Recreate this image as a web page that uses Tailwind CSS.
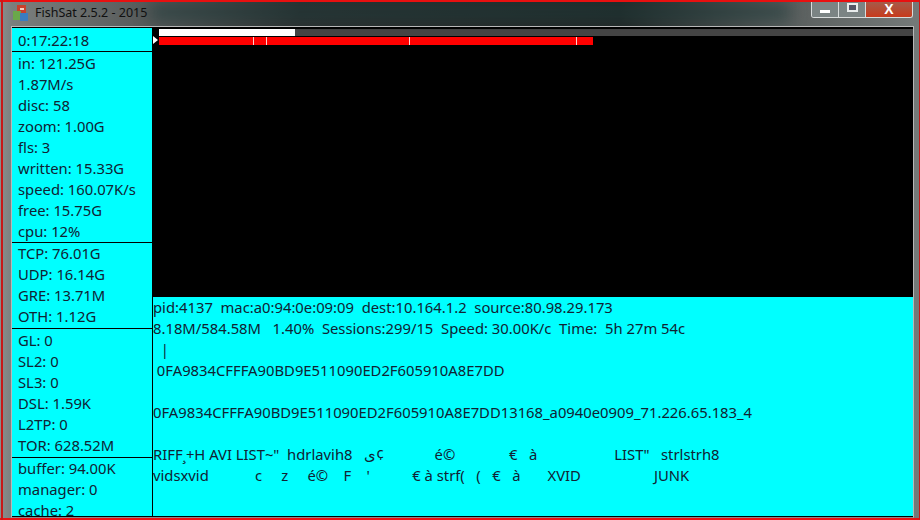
<!DOCTYPE html>
<html lang="en">
<head>
<meta charset="UTF-8">
<title>FishSat</title>
<script src="https://cdn.jsdelivr.net/npm/@tailwindcss/browser@4"></script>
</head>
<body class="w-[920px] h-[520px] overflow-hidden bg-[#555] font-['Noto_Sans','Liberation_Sans',sans-serif]">
<div class="relative w-[920px] h-[520px] flex flex-col border-t-2 border-b-2 border-[#e81010] bg-[linear-gradient(90deg,#8a8f8d_0,#7b7f7e_12px,#2c3030_300px,#222827_620px,#5c6160_800px,#757a79_920px)]">
  <div class="absolute left-[1px] -top-[2px] w-[2px] h-[520px] bg-[#c81818]"></div>
  <div class="absolute right-0 -top-[2px] w-[1px] h-[520px] bg-[#c81818]"></div>
  <!-- title bar -->
  <div class="relative h-[24px] shrink-0 flex items-center pl-[12px] pb-[2px] gap-[6px] overflow-hidden">
    <div class="absolute left-[150px] top-[2px] w-[640px] h-[16px] bg-[#1d3a3a]/60 blur-sm"></div>
    <svg class="relative" width="17" height="17" viewBox="0 0 17 17">
      <rect x="5" y="0" width="9" height="9" fill="#c8402c"/>
      <rect x="1" y="6" width="8" height="9" fill="#6aa84a"/>
      <rect x="8" y="8" width="8" height="8" fill="#3a7cc0"/>
      <rect x="8" y="3" width="4" height="2" fill="#f4d0c0"/>
    </svg>
    <span class="relative text-[12.5px] text-[#101010]">FishSat 2.5.2 - 2015</span>
    <div class="absolute top-[-2px] left-[811px] flex h-[18px] border border-t-0 border-[#d8dcdc] rounded-b-[3px] overflow-hidden">
      <div class="w-[27px] flex items-end justify-center pb-[4px] bg-[#7b8484] border-r border-[#d8dcdc]"><div class="w-[10px] h-[3px] bg-white"></div></div>
      <div class="w-[27px] flex items-start justify-center pt-[3px] bg-[#7b8484] border-r border-[#d8dcdc]"><div class="w-[11px] h-[9px] border-2 border-[#e8ecec] bg-[#556]"></div></div>
      <div class="w-[46px] flex items-center justify-center bg-[linear-gradient(180deg,#a06050,#c83a1c)] text-white text-[14px] font-bold leading-none font-['Liberation_Sans',sans-serif]">X</div>
    </div>
  </div>
  <!-- window body -->
  <div class="ml-[11px] mr-[6px] h-[492px] border border-[#b8b8b8] border-b-[#888] py-[1px] flex bg-black">
    <!-- left stats -->
    <div class="w-[141px] shrink-0 bg-[#00ffff] border-r border-black text-[14.8px] leading-[21px] text-[#123] flex flex-col">
      <div class="h-[24px] pl-[6px] pt-[2px] border-b border-black">0:17:22:18</div>
      <div class="h-[191px] pl-[6px] pt-[1px] border-b border-black">
        <p>in: 121.25G</p><p>1.87M/s</p><p>disc: 58</p><p>zoom: 1.00G</p><p>fls: 3</p><p>written: 15.33G</p><p>speed: 160.07K/s</p><p>free: 15.75G</p><p>cpu: 12%</p>
      </div>
      <div class="h-[86px] pl-[6px] border-b border-black">
        <p>TCP: 76.01G</p><p>UDP: 16.14G</p><p>GRE: 13.71M</p><p>OTH: 1.12G</p>
      </div>
      <div class="h-[129px] pl-[6px] pt-[1px] border-b border-black">
        <p>GL: 0</p><p>SL2: 0</p><p>SL3: 0</p><p>DSL: 1.59K</p><p>L2TP: 0</p><p>TOR: 628.52M</p>
      </div>
      <div class="h-[58px] pl-[6px]">
        <p>buffer: 94.00K</p><p>manager: 0</p><p>cache: 2</p>
      </div>
    </div>
    <!-- right side -->
    <div class="flex-1 flex flex-col min-w-0">
      <div class="relative h-[268px] shrink-0 bg-black pl-[6px]">
        <div class="absolute left-0 top-[8px] w-0 h-0 border-y-[4px] border-y-transparent border-l-[5px] border-l-white"></div>
        <div class="h-[7px] mt-[1px] bg-[#444]"><div class="w-[136px] h-full bg-white"></div></div>
        <div class="relative w-[434px] h-[8px] bg-[#ff0000] mt-[1px]">
          <div class="absolute left-[94px] top-0 w-px h-full bg-[#ffd0d0]"></div>
          <div class="absolute left-[107px] top-0 w-px h-full bg-[#ffd0d0]"></div>
          <div class="absolute left-[250px] top-0 w-px h-full bg-[#ffd0d0]"></div>
          <div class="absolute left-[417px] top-0 w-px h-full bg-[#ffd0d0]"></div>
        </div>
      </div>
      <div class="flex-1 bg-[#00ffff] border-t border-black text-[14.8px] leading-[21px] text-[#123] overflow-hidden">
        <p class="whitespace-pre">pid:4137  mac:a0:94:0e:09:09  dest:10.164.1.2  source:80.98.29.173</p>
        <p class="whitespace-pre">8.18M/584.58M   1.40%  Sessions:299/15  Speed: 30.00K/c  Time:  5h 27m 54c</p>
        <p class="whitespace-pre">  |</p>
        <p class="whitespace-pre"> 0FA9834CFFFA90BD9E511090ED2F605910A8E7DD</p>
        <p>&nbsp;</p>
        <p class="w-[620px] overflow-hidden whitespace-pre">0FA9834CFFFA90BD9E511090ED2F605910A8E7DD13168_a0940e0909_71.226.65.183_4</p>
        <p>&nbsp;</p>
        <p class="whitespace-pre">RIFF¸+H AVI LIST~"  hdrlavih8   ى¢             é©              €   à                    LIST"   strlstrh8</p>
        <p class="whitespace-pre">vidsxvid            c     z     é©    F    '           € à strf(   (   €   à       XVID                   JUNK</p>
      </div>
    </div>
  </div>
</div>
</body>
</html>
